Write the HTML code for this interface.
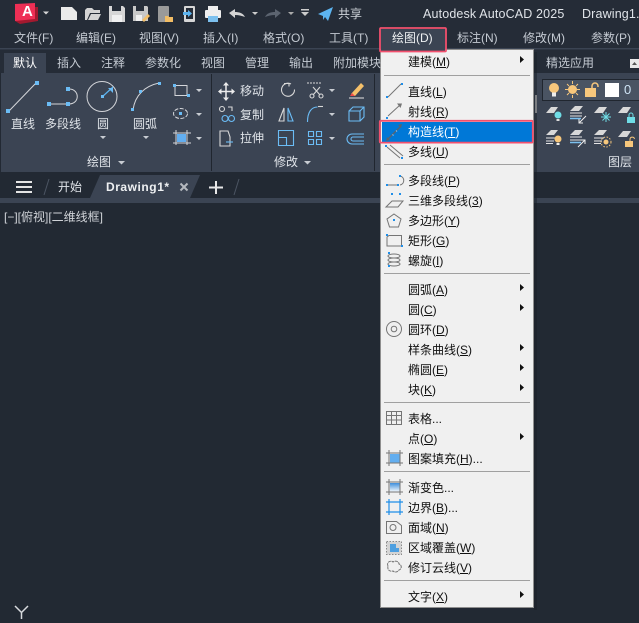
<!DOCTYPE html>
<html lang="zh"><head><meta charset="utf-8"><title>AutoCAD 2025</title>
<style>
html,body{margin:0;padding:0;background:#222933}
#a{position:relative;width:639px;height:623px;overflow:hidden;background:#222933;font:12px/16px "Liberation Sans","Noto Sans CJK SC",sans-serif}
.t,.m{position:absolute;white-space:nowrap}
.t{color:#dfe3e8;transform:translateY(-8px)}
.d{color:#c4cad2}
.m{color:#111;left:408px;transform:translateY(-8px)}
.m u{text-underline-offset:1px}
svg{position:absolute;left:0;top:0}
</style></head><body><div id="a">
<svg width="639" height="623" viewBox="0 0 639 623" fill="none">
<defs><linearGradient id="g" x1="0" y1="0" x2="0" y2="1"><stop offset="0" stop-color="#3f8fdc"/><stop offset="1" stop-color="#f0f6fc"/></linearGradient></defs>
<rect width="639" height="48" fill="#252c37"/>
<rect y="48" width="639" height="1.5" fill="#3b4453"/>
<rect y="50" width="639" height="23" fill="#252c37"/>
<rect x="4" y="53" width="42" height="20" fill="#3b4453"/>
<rect x="1" y="73" width="638" height="99" fill="#3b4453"/>
<rect x="211" y="74" width="1" height="97" fill="#20262f"/>
<rect x="374" y="74" width="1" height="97" fill="#20262f"/>
<rect y="172" width="639" height="26" fill="#222933"/>
<rect y="198" width="639" height="5" fill="#3b4453"/>
<path d="M90 198 100 175H200L190 198Z" fill="#3b4453"/>
<path d="M16 182h16M16 187h16M16 192h16" stroke="#e4e4e4" stroke-width="2"/>
<path d="M44 195 49 179M234 195 239 179" stroke="#4c5563"/>
<path d="M180.500 183.500l7 7m0-7l-7 7" stroke="#b5b9bf" stroke-width="2"/>
<path d="M216 181v13M209 187.500h14" stroke="#e8e8e8" stroke-width="2"/>
<path d="M15 606 21.500 612.500 28 606M21.500 612v7" stroke="#d8dade" stroke-width="1.500"/>

<!-- quick access -->
<path d="M18 7H38V21L20 24 15 21Z" fill="#a3192f"/><path d="M15 4 35 3V19L15 21Z" fill="#ee2f55"/>
<path d="M43 11.500h6l-3 3z" fill="#d8d8d8"/>
<path d="M61 7h11l5 5v8H61Z" fill="#eaeaea"/>
<path d="M85 20V10l2-2h5l2 2h6v3h-10l-3 7Z M88 20l3-6h10l-3 6Z" fill="#d4d4d4"/>
<path d="M109 6h14l2 2v14h-16Z" fill="#d6d6d6"/><rect x="112" y="6" width="9" height="5" fill="#252c37"/><rect x="112" y="15" width="10" height="7" fill="#f0f0f0"/>
<path d="M133 6h14l1 1v14h-15Z" fill="#c8c8c8"/><rect x="136" y="6" width="8" height="5" fill="#252c37"/><rect x="136" y="15" width="6" height="6" fill="#f0f0f0"/><path d="M142 20l6-6 2 2-6 6Z" fill="#f4c06a"/>
<rect x="158" y="6" width="11" height="16" rx="1" fill="#9a9a9a"/><path d="M165 16h3l1 1h4v5h-8Z" fill="#f2bd65"/>
<rect x="184" y="6" width="11" height="16" rx="1" fill="#d6d6d6"/><rect x="186" y="8" width="7" height="11" fill="#252c37"/><path d="M183 12h5v-2l4 3.500-4 3.500v-2h-5Z" fill="#5cb4f0"/>
<path d="M208 6h10v4h-10Z" fill="#eee"/><rect x="205" y="10" width="16" height="8" rx="1" fill="#eee"/><rect x="208" y="16" width="10" height="6" fill="#7cc0ee"/>
<path d="M229 13l6-4v3c4 0 8 1 10 5-3-1-6-2-10-2v3Z" fill="#d4d4d4"/>
<path d="M252 12h6l-3 3z" fill="#ccc"/>
<path d="M281 13l-6-4v3c-4 0-8 1-10 5 3-1 6-2 10-2v3Z" fill="#5c6470"/>
<path d="M288 12h6l-3 3z" fill="#aaa"/>
<path d="M301 9h8v1.500h-8ZM301 12h8l-4 4Z" fill="#ccc"/>
<path d="M318 14 333 7 328 21 325 17 323 20 323 16Z" fill="#5cb4f0"/>

<!-- draw panel -->
<g stroke="#d4d6da" stroke-width="1">
<path d="M9 111 36 83"/>
<path d="M50 104H68M69 89C80 89 80 104 69 104"/>
<circle cx="102" cy="96.500" r="15"/>
<path d="M133 110C135 95 145 86 159 83"/>
<path d="M175 85.500h12v10h-12Z"/>
<ellipse cx="180.500" cy="113.500" rx="7" ry="5" stroke-dasharray="4 1.500"/>
<path d="M176 130v15M187 130v15M173 133h18M173 143h18"/>
</g>
<path d="M177 134h9v8h-9Z" fill="#62aef0"/>
<path d="M102 97 113 87" stroke="#5cb4f0" stroke-width="1.200"/>
<g fill="#6bbcf5">
<rect x="6" y="109" width="4" height="4"/><rect x="35" y="81" width="4" height="4"/>
<rect x="47" y="102" width="4" height="4"/><rect x="66" y="102" width="4" height="4"/><rect x="66" y="87" width="4" height="4"/>
<rect x="101" y="95" width="3" height="3"/><path d="M108 88h5v5Z"/>
<rect x="131" y="108" width="3" height="3"/><rect x="139" y="90" width="3" height="3"/><rect x="158" y="82" width="3" height="3"/>
<rect x="173" y="84" width="3" height="3"/><rect x="187" y="94" width="3" height="3"/>
<rect x="179" y="112" width="3" height="3"/>
</g>
<g fill="#c8ccd2">
<path d="M196 89h6l-3 3ZM196 113h6l-3 3ZM196 137h6l-3 3ZM100 136h6l-3 3ZM143 136h6l-3 3ZM118 161h7l-3.500 3.500ZM304 161h7l-3.500 3.500ZM329 89h6l-3 3ZM329 113h6l-3 3ZM329 137h6l-3 3Z"/>
</g>
<!-- modify panel -->
<g stroke="#ececec" stroke-width="1.500"><path d="M226 84v16M219 91.500h15"/></g>
<path d="M226 82l-3 3.500h6ZM226 101l-3-3.500h6ZM218 91.500l3.500-3v6ZM235 91.500l-3.500-3v6Z" fill="#ececec"/>
<g stroke="#d8d8d8" stroke-width="1.100">
<path d="M291 84a6.500 6.500 0 1 0 3.500 5.500"/><path d="M284 83.500h5v3"/>
<circle cx="222" cy="109" r="2.500"/><path d="M228 107h4v4"/>
<path d="M220 131h8l2 6v9h-10Z"/>
<path d="M284 108l-5 13h5Z"/>
<path d="M313 87l7 8M320 87l-7 8"/><circle cx="312" cy="96" r="2"/><circle cx="321" cy="96" r="2"/>
<path d="M307 83h15" stroke-dasharray="2 1"/>
<path d="M307.500 122c0-10 4-15 10-15" stroke="#6bbcf5"/><path d="M318 106.500h5"/><path d="M307.500 122v0"/>
</g>
<g stroke="#6bbcf5" fill="none" stroke-width="1.100">
<circle cx="225" cy="118.500" r="3"/><circle cx="231.500" cy="118.500" r="3"/>
<path d="M226 142h7"/>
<path d="M278.500 130.500h15v15h-15ZM278.500 137.500h8v8"/>
<path d="M308.500 131.500h5v5h-5ZM316.500 131.500h5v5h-5ZM308.500 139.500h5v5h-5ZM316.500 139.500h5v5h-5Z"/>
<path d="M349 111h11v10h-11ZM349 111l4-4h11v10l-4 4M360 111l4-4"/>
<path d="M364 134h-12a4.500 4.500 0 0 0 0 10h12M364 137h-11a1.800 1.800 0 0 0 0 4h11"/>
<path d="M288 108v13h5Z"/>
</g>
<path d="M351 94l10-11 3 3-9 10Z" fill="#f4c06a"/><path d="M349 98h15" stroke="#e4e4e4"/><path d="M350 96l2-3 3 3Z" fill="#ef4b4b"/>
<rect x="535" y="95" width="2" height="18" fill="#dcdcdc"/>
<!-- layers -->
<rect x="542.500" y="79.500" width="97" height="21" fill="#4a5463" stroke="#20262f"/>
<circle cx="554" cy="88" r="5" fill="#f7c77c"/><rect x="552" y="92.500" width="4" height="4" fill="#eee"/>
<circle cx="572.500" cy="89.500" r="4.500" fill="#f7c77c"/><path d="M572.500 81v3M572.500 95v3M565 89.500h3M577 89.500h3M567 84l2 2M576 93l2 2M578 84l-2 2M569 93l-2 2" stroke="#f7c77c"/>
<rect x="585" y="88" width="11" height="9" fill="#f7c77c"/><path d="M592 88v-2a3 3 0 0 1 6 0v1" stroke="#f7c77c" stroke-width="1.500"/>
<rect x="605" y="83" width="14" height="14" fill="#fff"/>
<g fill="#d8d8d8">
<path d="M546 113l5-6h7l-4 6ZM594 113l5-6h8l-4 6ZM618 113l5-6h8l-4 6ZM618 137l5-6h8l-4 6Z"/>
<path d="M570 111l5-5h8l-4 5ZM570 135l5-5h8l-4 5ZM546 135l5-5h7l-4 5ZM594 135l5-5h8l-4 5Z"/>
</g>
<g stroke="#e4e4e4"><path d="M570 113h12M570 116h12M546 138h10M546 141h8M546 143.500h7M594 138h10M594 141h8M594 143.500h7M570 137h12M570 140h12"/></g>
<path d="M570 118.500h11M570 142.500h11" stroke="#7cc0ee" stroke-width="1.500"/>
<circle cx="558" cy="115" r="3.500" fill="#6fdde6"/><rect x="556.500" y="119" width="3" height="2" fill="#ddd"/>
<path d="M586 116l-7 7M579 119v4h4" stroke="#eee"/><path d="M578 147l7-7M581 140h4v4" stroke="#eee"/>
<path d="M601 117h10M606 112v10M602.500 113.500l7 7M609.500 113.500l-7 7" stroke="#6fdde6"/>
<rect x="627" y="117" width="8" height="6" fill="#6fdde6"/><path d="M629 117v-2a2 2 0 0 1 4 0v2" stroke="#6fdde6"/>
<circle cx="558" cy="139" r="3.500" fill="#f7c77c"/><rect x="556.500" y="143" width="3" height="2" fill="#eee"/>
<circle cx="606" cy="142" r="2.500" fill="#f7c77c"/><circle cx="606" cy="142" r="5" stroke="#f7c77c" stroke-dasharray="1.500 1.500"/>
<rect x="625" y="141" width="8" height="6" fill="#f7c77c"/><path d="M630 141v-2a2.300 2.300 0 0 1 4.500 0" stroke="#f7c77c"/>
<rect x="630" y="59" width="9" height="9" fill="#e8e8e8"/><path d="M632 65h5l-2.500-3Z" fill="#555"/>

<!-- draw menu -->
<rect x="534" y="52" width="3" height="558" fill="#1a1f27" opacity=".5"/>
<rect x="380.500" y="49.500" width="153" height="558" fill="#f0f0f0" stroke="#8f8f8f"/>
<rect x="381" y="29" width="64" height="22" fill="#3b4453"/>
<rect x="380" y="28" width="66" height="23.500" rx="1" stroke="#f2506e" stroke-width="1.800"/>
<rect x="382" y="122" width="150" height="20" fill="#0078d7"/>
<rect x="379.800" y="120.800" width="153" height="21.800" rx="1" stroke="#f2506e" stroke-width="1.800"/>
<path d="M384 75.500h146M384 164.500h146M384 273.500h146M384 402.500h146M384 471.500h146M384 580.500h146" stroke="#a0a0a0"/>
<g fill="#111"><path d="M520 56v7l4-3.500ZM520 284v7l4-3.500ZM520 304v7l4-3.500ZM520 344v7l4-3.500ZM520 364v7l4-3.500ZM520 384v7l4-3.500ZM520 433v7l4-3.500ZM520 591v7l4-3.500Z"/></g>
<g stroke="#757575" stroke-width="1">
<path d="M388 97 401 84"/><path d="M388 116 400 105"/>
<path d="M387 147 400 158M390 145 403 156"/>
<path d="M388 185H397M400 176C405 177 405 184 400 185"/>
<path d="M386 207 392 201H403L398 207Z"/>
<path d="M394 214l7 5-2.500 8h-9l-2.500-8Z"/>
<path d="M387 237 389 235.500H401.500V246H387Z"/>
<ellipse cx="394" cy="256" rx="6" ry="2"/><ellipse cx="394" cy="260" rx="6" ry="2"/><ellipse cx="394" cy="264" rx="6" ry="2"/>
<circle cx="394" cy="329" r="7.500"/><circle cx="394" cy="329" r="2.800"/>
<path d="M386.500 411.500h15v13h-15ZM386.500 415.500h15M386.500 420h15M391.500 411.500v13M396.500 411.500v13"/>
<path d="M389 450v16M400 450v16M386 453h17M386 463h17"/>
<path d="M389 479v16M400 479v16M386 482h17M386 492h17"/>
<path d="M386.500 521.500h10l5 4v8h-15Z"/><circle cx="393" cy="527.500" r="3"/>
<path d="M388 566c-2-4 3-6 5-4 3-2 6 0 6 2 3 1 3 5 0 6-2 3-5 2-6 1-3 1-6-1-5-5Z" stroke-dasharray="3 .7"/>
</g>
<path d="M402 103.500h-5l3.500 4.500Z" fill="#757575"/>
<rect x="390" y="454" width="9.500" height="8.500" fill="#62aef0"/>
<rect x="390" y="483" width="9.500" height="8.500" fill="url(#g)"/>
<path d="M389 499v16M400 499v16M386 502h17M386 512h17" stroke="#1f8ee8" stroke-width="1.200"/>
<rect x="386.500" y="541.500" width="15" height="13" fill="#d4d4d4" stroke="#8a8a8a" stroke-dasharray="1.500 1.500"/><path d="M390 544h6v4h3v4h-9Z" fill="#4d9fe0"/>
<!-- construction line -->
<path d="M388 139 400 127" stroke="#59636f" stroke-width="1.300"/>
<path d="M386 141l1-4 3 3ZM402 124l-1 4-3-3Z" fill="#59636f"/>
<path d="M392.500 134.500l1 1M396 130.500l1 1" stroke="#8fd0ff"/>
<g fill="#1f8ee8">
<rect x="386" y="96" width="2" height="2"/><rect x="401" y="83" width="2" height="2"/><rect x="386" y="117" width="2" height="2"/>
<rect x="385" y="145" width="2" height="2"/><rect x="401" y="157" width="2" height="2"/>
<rect x="386" y="184" width="2" height="2"/><rect x="397" y="184" width="2" height="2"/><rect x="399" y="175" width="2" height="2"/>
<rect x="391" y="193" width="2" height="2"/><rect x="399" y="193" width="2" height="2"/><rect x="393" y="219" width="2" height="2"/>
<rect x="386" y="234" width="2" height="2"/><rect x="401" y="245" width="2" height="2"/>
<rect x="388" y="252" width="2" height="2"/><rect x="388" y="265" width="2" height="2"/>
</g>
</svg>

<div class="t" style="left:338px;top:14px;color:#cfd4da">共享</div>
<div class="t" style="left:423px;top:14px;font-size:12.500px;letter-spacing:.15px">Autodesk AutoCAD 2025</div>
<div class="t" style="left:582px;top:14px;font-size:12.500px;letter-spacing:.15px">Drawing1.</div>
<div class="t" style="left:22px;top:12px;color:#fff;font-weight:700;font-size:15px">A</div>

<div class="t d" style="left:14px;top:38px">文件(F)</div>
<div class="t d" style="left:76px;top:38px">编辑(E)</div>
<div class="t d" style="left:139px;top:38px">视图(V)</div>
<div class="t d" style="left:203px;top:38px">插入(I)</div>
<div class="t d" style="left:263px;top:38px">格式(O)</div>
<div class="t d" style="left:329px;top:38px">工具(T)</div>
<div class="t" style="left:392px;top:38px;color:#eef0f2">绘图(D)</div>
<div class="t d" style="left:457px;top:38px">标注(N)</div>
<div class="t d" style="left:523px;top:38px">修改(M)</div>
<div class="t d" style="left:591px;top:38px">参数(P)</div>

<div class="t" style="left:13px;top:63px;color:#fff">默认</div>
<div class="t d" style="left:57px;top:63px">插入</div>
<div class="t d" style="left:101px;top:63px">注释</div>
<div class="t d" style="left:145px;top:63px">参数化</div>
<div class="t d" style="left:201px;top:63px">视图</div>
<div class="t d" style="left:245px;top:63px">管理</div>
<div class="t d" style="left:289px;top:63px">输出</div>
<div class="t d" style="left:333px;top:63px">附加模块</div>
<div class="t d" style="left:546px;top:63px">精选应用</div>

<div class="t" style="left:11px;top:124px">直线</div>
<div class="t" style="left:45px;top:124px">多段线</div>
<div class="t" style="left:97px;top:124px">圆</div>
<div class="t" style="left:133px;top:124px">圆弧</div>
<div class="t" style="left:87px;top:162px">绘图</div>
<div class="t" style="left:240px;top:91px">移动</div>
<div class="t" style="left:240px;top:115px">复制</div>
<div class="t" style="left:240px;top:138px">拉伸</div>
<div class="t" style="left:274px;top:162px">修改</div>
<div class="t" style="left:608px;top:162px">图层</div>
<div class="t" style="left:624px;top:90px;color:#cfe4f5;font-size:13px">0</div>

<div class="t" style="left:58px;top:187px">开始</div>
<div class="t" style="left:106px;top:187px;font-weight:700;color:#eef0f2;letter-spacing:.55px">Drawing1*</div>
<div class="t" style="left:4px;top:217px;color:#d0d3d8">[−][俯视][二维线框]</div>

<div class="m" style="top:62px">建模(<u>M</u>)</div>
<div class="m" style="top:92px">直线(<u>L</u>)</div>
<div class="m" style="top:112px">射线(<u>R</u>)</div>
<div class="m" style="top:132px;color:#fff">构造线(<u>T</u>)</div>
<div class="m" style="top:152px">多线(<u>U</u>)</div>
<div class="m" style="top:181px">多段线(<u>P</u>)</div>
<div class="m" style="top:201px">三维多段线(<u>3</u>)</div>
<div class="m" style="top:221px">多边形(<u>Y</u>)</div>
<div class="m" style="top:241px">矩形(<u>G</u>)</div>
<div class="m" style="top:261px">螺旋(<u>I</u>)</div>
<div class="m" style="top:290px">圆弧(<u>A</u>)</div>
<div class="m" style="top:310px">圆(<u>C</u>)</div>
<div class="m" style="top:330px">圆环(<u>D</u>)</div>
<div class="m" style="top:350px">样条曲线(<u>S</u>)</div>
<div class="m" style="top:370px">椭圆(<u>E</u>)</div>
<div class="m" style="top:390px">块(<u>K</u>)</div>
<div class="m" style="top:419px">表格...</div>
<div class="m" style="top:439px">点(<u>O</u>)</div>
<div class="m" style="top:459px">图案填充(<u>H</u>)...</div>
<div class="m" style="top:488px">渐变色...</div>
<div class="m" style="top:508px">边界(<u>B</u>)...</div>
<div class="m" style="top:528px">面域(<u>N</u>)</div>
<div class="m" style="top:548px">区域覆盖(<u>W</u>)</div>
<div class="m" style="top:568px">修订云线(<u>V</u>)</div>
<div class="m" style="top:597px">文字(<u>X</u>)</div>
</div></body></html>
